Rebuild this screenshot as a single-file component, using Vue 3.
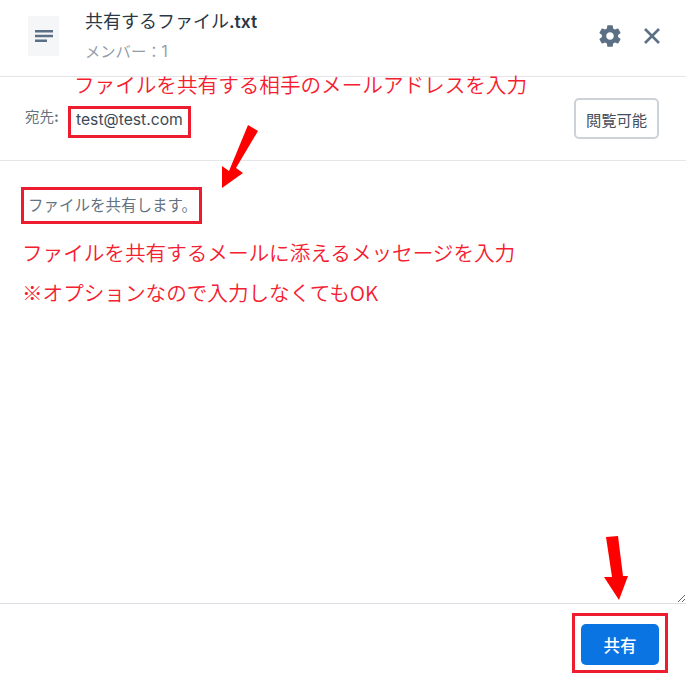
<script setup>
const title = '共有するファイル'
const ext = '.txt'
const message = 'ファイルを共有します。'
</script>

<template>
  <div class="page">
    <header class="head">
      <div class="thumb">
        <svg width="20" height="20" viewBox="0 0 20 20"><path d="M1 4h18v2.400H1zM1 8.800h18v2.400H1zM1 13.600h12v2.400H1z" fill="#5b6f85"/></svg>
      </div>
      <div class="info">
        <div class="title">{{ title }}<b>{{ ext }}</b></div>
        <div class="members">メンバー：1</div>
      </div>
      <div class="tools">
        <svg class="gear" width="26" height="26" viewBox="0 0 24 24"><path fill="#5b6f85" d="M19.430 12.980c.040-.320.070-.640.070-.980s-.030-.660-.070-.980l2.110-1.650c.190-.150.240-.420.120-.640l-2-3.460c-.120-.220-.390-.300-.610-.220l-2.490 1c-.520-.400-1.080-.730-1.690-.980l-.380-2.650C14.460 2.180 14.250 2 14 2h-4c-.250 0-.460.180-.490.420l-.380 2.650c-.610.250-1.170.590-1.690.980l-2.490-1c-.230-.090-.490 0-.610.220l-2 3.460c-.130.220-.070.490.120.640l2.110 1.650c-.040.320-.070.650-.070.980s.030.660.070.980l-2.110 1.650c-.190.150-.240.420-.120.640l2 3.460c.120.220.390.300.610.220l2.490-1c.520.400 1.080.730 1.690.980l.380 2.650c.030.240.240.420.490.420h4c.250 0 .460-.180.490-.420l.380-2.650c.610-.250 1.170-.590 1.690-.980l2.490 1c.230.090.490 0 .610-.220l2-3.460c.120-.220.070-.490-.120-.640l-2.110-1.650zM12 15.500c-1.930 0-3.500-1.570-3.500-3.500s1.570-3.500 3.500-3.500 3.500 1.570 3.500 3.500-1.570 3.500-3.500 3.500z"/></svg>
        <svg class="close" width="20" height="20" viewBox="0 0 20 20"><path d="M3 3l14 14M17 3L3 17" stroke="#5b6f85" stroke-width="2.600" fill="none"/></svg>
      </div>
    </header>

    <section class="to">
      <span class="to-label">宛先<b>:</b></span>
      <span class="to-value">test@test.com</span>
      <button class="perm">閲覧可能</button>
    </section>

    <textarea class="msg" :value="message"></textarea>

    <footer class="foot">
      <button class="share">共有</button>
    </footer>

    <div class="note n1">ファイルを共有する相手のメールアドレスを入力</div>
    <div class="note n2">ファイルを共有するメールに添えるメッセージを入力</div>
    <div class="note n3">※オプションなので入力しなくてもOK</div>

    <div class="mark m1"></div>
    <div class="mark m2"></div>
    <div class="mark m3"></div>

    <svg class="arrows" width="686" height="680" viewBox="0 0 686 680">
      <path fill="#ff0000" d="M248 125L258 131L236 168L243 173L222 188L222 166L229 171Z"/>
      <path fill="#ff0000" d="M606 537L618 536L623 576L628 576L619 600L604 577L612 577Z"/>
    </svg>
  </div>
</template>

<style scoped>
.page {
  position: relative;
  width: 686px;
  height: 680px;
  display: flex;
  flex-direction: column;
  background: #fff;
  overflow: hidden;
  font-family: Inter, "Noto Sans CJK JP", sans-serif;
}
.head {
  flex: none;
  display: flex;
  align-items: center;
  padding: 0 24px 4px 28px;
  border-bottom: 1px solid #e4e6e9;
  box-sizing: border-box;
  height: 77px;
}
.thumb {
  width: 31px;
  height: 40px;
  background: #f4f6f8;
  display: flex;
  align-items: center;
  justify-content: center;
  flex: none;
}
.info {
  margin-left: 26px;
  flex: 1;
}
.title {
  font-size: 18px;
  line-height: 26px;
  color: #2b3743;
}
.title b {
  font-size: 17.500px;
  font-weight: 600;
}
.members {
  margin-top: 5px;
  font-size: 15.300px;
  line-height: 24px;
  color: #919eab;
}
.tools {
  display: flex;
  align-items: center;
  gap: 19px;
}
.to {
  height: 84px;
  flex: none;
  display: flex;
  align-items: center;
  padding: 0 27px 0 25px;
  border-bottom: 1px solid #e4e6e9;
  box-sizing: border-box;
}
.to-label {
  font-size: 14.500px;
  line-height: 18px;
  color: #637381;
  width: 51px;
  margin-bottom: 3px;
}
.to-label b {
  font-weight: 700;
}
.to-value {
  flex: 1;
  font-size: 15.700px;
  line-height: 22px;
  margin-top: 2px;
  color: #3d4a57;
}
.perm {
  width: 85px;
  height: 41px;
  padding: 0;
  background: #fff;
  border: 2px solid #ccd2d8;
  border-radius: 5px;
  font: inherit;
  font-size: 15.300px;
  color: #454f5b;
}
.msg {
  flex: 1;
  display: block;
  width: 100%;
  box-sizing: border-box;
  border: 0;
  outline: 0;
  margin: 0;
  padding: 34px 28px 0;
  font: inherit;
  font-size: 15.500px;
  line-height: 22px;
  color: #637381;
  background: #fff;
}
.foot {
  height: 77px;
  flex: none;
  box-sizing: border-box;
  border-top: 1px solid #dcdfe3;
  display: flex;
  justify-content: flex-end;
  align-items: flex-start;
  padding: 20px 27px 0 0;
}
.share {
  width: 78px;
  height: 41px;
  padding: 0;
  border: 0;
  border-radius: 5px;
  background: #0a74e3;
  color: #fff;
  font: inherit;
  font-size: 16.500px;
  font-weight: 500;
}
.note {
  position: absolute;
  font-family: "Noto Sans CJK JP", sans-serif;
  font-size: 20.600px;
  font-weight: 350;
  line-height: 28px;
  color: #f5202f;
  white-space: nowrap;
}
.n1 { left: 74px; top: 70px; }
.n2 { left: 22px; top: 238px; }
.n3 { left: 22px; top: 278px; }
.mark {
  position: absolute;
  border: 3px solid #ed1c2e;
  box-sizing: border-box;
}
.m1 { left: 68px; top: 106px; width: 123px; height: 32px; }
.m2 { left: 21px; top: 187px; width: 181px; height: 37px; }
.m3 { left: 572px; top: 613px; width: 96px; height: 60px; }
.arrows {
  position: absolute;
  left: 0;
  top: 0;
  pointer-events: none;
}
</style>
